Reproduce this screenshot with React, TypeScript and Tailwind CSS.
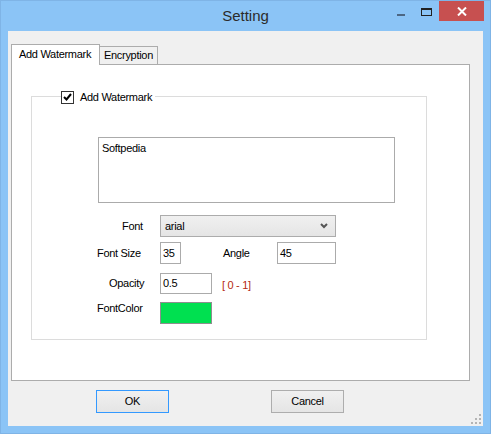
import React from "react";

const ui = { fontFamily: '"Liberation Sans", Arial, sans-serif' };

function SizeGrip() {
  // little dotted triangle in the corner
  const dots = [
    [8, 0],
    [4, 4],
    [8, 4],
    [0, 8],
    [4, 8],
    [8, 8],
  ];
  return (
    <svg width="10" height="10" viewBox="0 0 10 10" className="absolute right-[2px] bottom-[2px]">
      {dots.map(([x, y]) => (
        <rect key={`${x}-${y}`} x={x} y={y} width="2" height="2" fill="#b4b4b4" />
      ))}
    </svg>
  );
}

export default function App() {
  return (
    <div
      className="w-[491px] h-[434px] bg-[#8bc4f6] border border-[#7fb4e6] flex flex-col text-[11px] tracking-[-0.3px] text-black overflow-hidden"
      style={ui}
    >
      {/* title bar */}
      <div className="h-[30px] flex items-start shrink-0">
        <div className="w-[102px]" />
        <div className="flex-1 text-center text-[15px] tracking-normal leading-[18px] pt-[6px] text-[#2b2b2b]">Setting</div>
        <div className="w-[102px] flex items-start justify-end">
          <div className="w-[26px] h-[20px] flex items-center justify-center">
            <div className="w-[8px] h-[2px] bg-[#4c6784] mt-[7px]" />
          </div>
          <div className="w-[26px] h-[20px] flex items-center justify-center">
            <div className="w-[11px] h-[8px] border border-[#222] border-t-2 mt-[2px]" />
          </div>
          <div className="w-[45px] h-[20px] bg-[#c75050] flex items-center justify-center mr-[6px]">
            <svg width="10" height="9" viewBox="0 0 10 9">
              <path d="M1 0.5 L9 8.5 M9 0.5 L1 8.5" stroke="#fff" strokeWidth="2" />
            </svg>
          </div>
        </div>
      </div>

      {/* client area */}
      <div className="flex-1 mx-[7px] mb-[7px] bg-[#f0f0f0] relative px-[3px] pt-[13px] flex flex-col">
        {/* tabs */}
        <div className="flex items-end h-[20px]">
          <div className="h-[21px] -mb-px w-[89px] bg-white border border-b-0 border-[#acacac] relative z-10 flex items-center pl-[7px] pb-[1px]">
            Add Watermark
          </div>
          <div className="h-[18px] w-[58px] bg-[#f0f0f0] border-t border-r border-[#acacac] flex items-center pl-[4px]">
            Encryption
          </div>
        </div>

        {/* tab page */}
        <div className="w-[459px] h-[317px] border border-[#acacac] bg-white">
          <div className="ml-[19px] mt-[31px] w-[396px] h-[244px] border border-[#dcdcdc] relative">
            <div className="absolute left-[29px] -top-[7px] flex items-center gap-[6px] bg-white pr-[3px] h-[14px]">
              <div className="w-[13px] h-[13px] border border-[#333] bg-white flex items-center justify-center">
                <svg width="9" height="8" viewBox="0 0 9 8">
                  <path d="M1 4 L3.5 6.5 L8 1" stroke="#000" strokeWidth="2" fill="none" />
                </svg>
              </div>
              <span>Add Watermark</span>
            </div>

            <div className="pl-[65px] pt-[40px] flex flex-col">
              <div className="ml-[1px] w-[297px] h-[66px] border border-[#ababab] px-[3px] pt-[3px] leading-[14px]">
                Softpedia
              </div>

              <div className="flex items-center mt-[12px]">
                <div className="w-[63px] pl-[25px]">Font</div>
                <div className="w-[176px] h-[22px] border border-[#acacac] bg-gradient-to-b from-[#f0f0f0] to-[#e5e5e5] flex items-center justify-between pl-[4px] pr-[7px]">
                  <span>arial</span>
                  <svg width="8" height="6" viewBox="0 0 8 6">
                    <path d="M1 1 L4 4 L7 1" stroke="#555" strokeWidth="2" fill="none" />
                  </svg>
                </div>
              </div>

              <div className="flex items-center mt-[5px]">
                <div className="w-[63px]">Font Size</div>
                <div className="w-[21px] h-[22px] border border-[#ababab] flex items-center pl-[2px]">35</div>
                <div className="w-[54px] ml-[42px]">Angle</div>
                <div className="w-[59px] h-[22px] border border-[#ababab] flex items-center pl-[2px]">45</div>
              </div>

              <div className="flex items-center mt-[9px]">
                <div className="w-[63px] pl-[12px]">Opacity</div>
                <div className="w-[52px] h-[21px] border border-[#ababab] flex items-center pl-[2px]">0.5</div>
                <div className="ml-[10px] mt-[4px] text-[#b52a12]">[ 0 - 1]</div>
              </div>

              <div className="flex items-start mt-[8px]">
                <div className="w-[63px] leading-[13px]">FontColor</div>
                <div className="w-[52px] h-[22px] border border-[#8e8e8e] bg-[#00e050]" />
              </div>
            </div>
          </div>
        </div>

        {/* buttons */}
        <div className="flex mt-[9px] ml-[85px] gap-[102px]">
          <button className="w-[73px] h-[23px] border border-[#3399ff] bg-gradient-to-b from-[#f0f0f0] to-[#e5e5e5] text-[11px] tracking-[-0.3px]" style={ui}>
            OK
          </button>
          <button className="w-[73px] h-[23px] border border-[#adadad] bg-gradient-to-b from-[#f0f0f0] to-[#e5e5e5] text-[11px] tracking-[-0.3px]" style={ui}>
            Cancel
          </button>
        </div>

        <SizeGrip />
      </div>
    </div>
  );
}
